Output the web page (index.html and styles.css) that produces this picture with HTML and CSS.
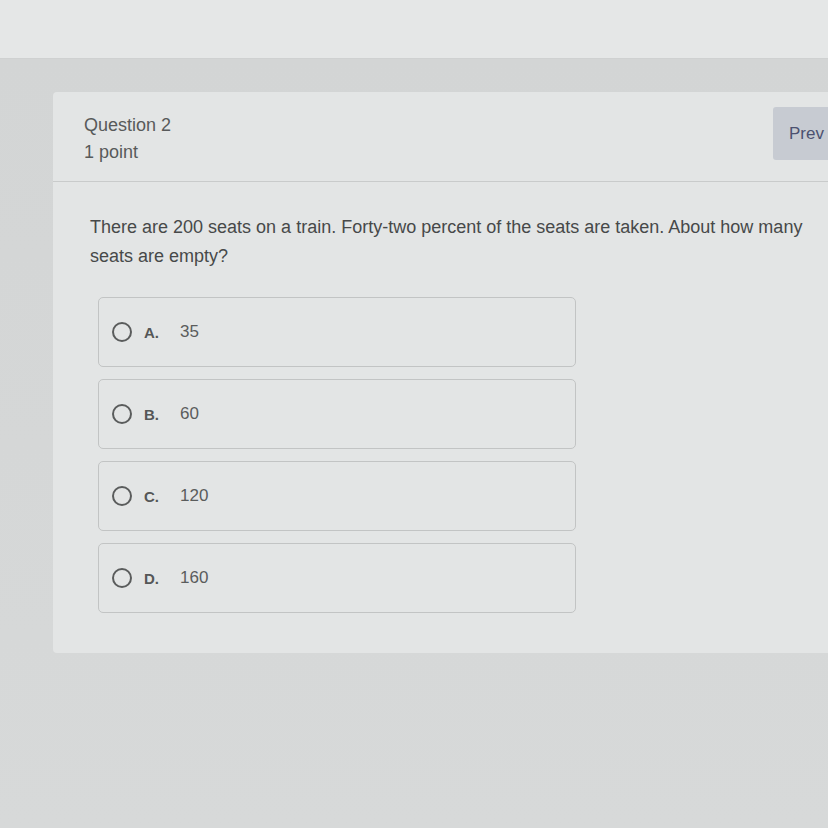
FILE: index.html
```html
<!DOCTYPE html>
<html>
<head>
<meta charset="utf-8">
<link rel="stylesheet" href="styles.css">
</head>
<body>
<div class="top"></div>
<div class="main">
  <div class="card">
    <div class="card-header">
      <div class="meta">
        <div class="qnum">Question 2</div>
        <div class="points">1 point</div>
      </div>
      <button class="prev">Prev</button>
    </div>
    <div class="card-body">
      <p class="question">There are 200 seats on a train. Forty-two percent of the seats are taken. About how many seats are empty?</p>
      <div class="options">
        <label class="option"><span class="radio"></span><span class="letter">A.</span><span class="value">35</span></label>
        <label class="option"><span class="radio"></span><span class="letter">B.</span><span class="value">60</span></label>
        <label class="option"><span class="radio"></span><span class="letter">C.</span><span class="value">120</span></label>
        <label class="option"><span class="radio"></span><span class="letter">D.</span><span class="value">160</span></label>
      </div>
    </div>
  </div>
</div>
</body>
</html>
```
FILE: styles.css
```css
html, body {
  margin: 0;
  padding: 0;
  width: 828px;
  height: 828px;
  overflow: hidden;
  background: #d6d8d8;
  font-family: "Liberation Sans", Arial, sans-serif;
}
.top {
  height: 58px;
  background: #e5e7e7;
  border-bottom: 1px solid #cfd1d1;
}
.main {
  padding: 33px 0 0 53px;
  background: linear-gradient(#d3d5d5, #d7d9d9);
  height: 736px;
}
.card {
  width: 820px;
  background: #e3e5e5;
  border-radius: 4px;
  padding-bottom: 40px;
}
.card-header {
  display: flex;
  justify-content: space-between;
  align-items: flex-start;
  height: 89px;
  border-bottom: 1px solid #c9cbcb;
  padding-left: 31px;
}
.meta {
  padding-top: 20px;
  color: #585a5a;
  font-size: 18px;
  line-height: 27px;
}
.prev {
  margin: 15px 0 0 0;
  width: 100px;
  height: 53px;
  border: none;
  border-radius: 3px 0 0 3px;
  background: #c7cbd2;
  color: #4c5170;
  font-family: "Liberation Sans", Arial, sans-serif;
  font-size: 17px;
  text-align: left;
  padding: 0 0 0 16px;
}
.card-body {
  padding: 31px 0 0 37px;
}
.question {
  margin: 0;
  width: 720px;
  font-size: 18px;
  line-height: 29px;
  color: #474949;
}
.options {
  margin: 26px 0 0 8px;
  display: flex;
  flex-direction: column;
  gap: 12px;
}
.option {
  display: flex;
  align-items: center;
  width: 478px;
  height: 70px;
  border: 1px solid #c2c4c4;
  border-radius: 5px;
  padding-left: 13px;
  box-sizing: border-box;
}
.radio {
  width: 16px;
  height: 16px;
  border: 2.5px solid #5a5c5c;
  border-radius: 50%;
  flex: none;
}
.letter {
  margin-left: 12px;
  width: 36px;
  font-size: 15px;
  font-weight: bold;
  color: #555757;
}
.value {
  font-size: 17px;
  color: #5a5c5c;
}
```
